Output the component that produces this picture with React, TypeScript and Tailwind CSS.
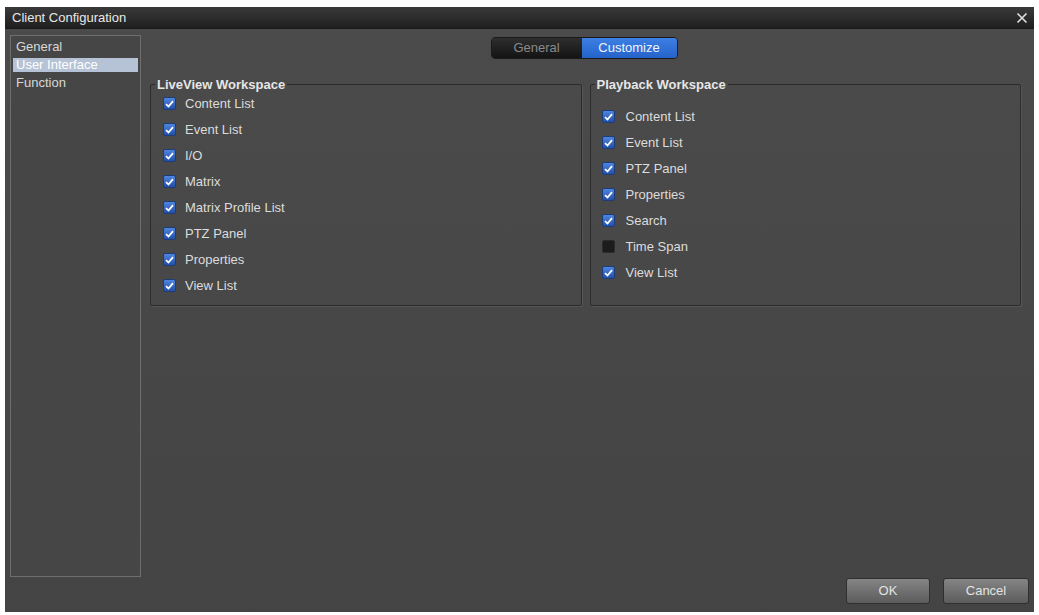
import React from "react";

const liveView = [
  "Content List",
  "Event List",
  "I/O",
  "Matrix",
  "Matrix Profile List",
  "PTZ Panel",
  "Properties",
  "View List",
];

const playback: [string, boolean][] = [
  ["Content List", true],
  ["Event List", true],
  ["PTZ Panel", true],
  ["Properties", true],
  ["Search", true],
  ["Time Span", false],
  ["View List", true],
];

function Check({ on }: { on: boolean }) {
  if (!on) {
    return <span className="w-[13px] h-[13px] rounded-[2px] bg-[#1c1c1c] border border-[#2a2a2a] shrink-0" />;
  }
  return (
    <span className="w-[13px] h-[13px] rounded-[2px] bg-gradient-to-b from-[#4f86e0] to-[#234fa8] border border-[#1d3c7a] shrink-0 flex items-center justify-center">
      <svg width="9" height="8" viewBox="0 0 9 8">
        <path d="M1 4.2 L3.5 6.5 L8 1.2" fill="none" stroke="#ffffff" strokeWidth="1.8" />
      </svg>
    </span>
  );
}

function Item({ label, on, gap }: { label: string; on: boolean; gap: string }) {
  return (
    <div className={"h-[26px] flex items-center " + gap}>
      <Check on={on} />
      <span className="text-[13px] text-[#dcdcdc]">{label}</span>
    </div>
  );
}

export default function App() {
  return (
    <div className="w-[1039px] h-[615px] bg-white pt-[7px] px-[5px] pb-[3px] overflow-hidden" style={{ fontFamily: '"Liberation Sans", Arial, sans-serif' }}>
      <div className="h-full flex flex-col bg-gradient-to-b from-[#4b4b4b] to-[#444444]">
        {/* title bar */}
        <div className="h-[22px] shrink-0 flex items-center justify-between pl-[7px] pr-[6px] bg-gradient-to-b from-[#3a3a3a] to-[#1f1f1f] border-b border-[#1a1a1a]">
          <span className="text-[13px] text-[#e8e8e8]">Client Configuration</span>
          <svg width="12" height="12" viewBox="0 0 12 12">
            <path d="M1.5 1.5 L10.5 10.5 M10.5 1.5 L1.5 10.5" stroke="#e0e0e0" strokeWidth="1.6" />
          </svg>
        </div>

        <div className="flex-1 flex pt-[6px] pl-[5px] pr-[13px] min-h-0">
          {/* sidebar */}
          <div className="w-[131px] shrink-0 border border-[#6e6e6e] bg-[#464646] pt-[2px] px-[2px]">
            <div className="h-[18px] flex items-center pl-[3px] text-[13px] text-[#d8d8d8]">General</div>
            <div className="h-[18px] flex items-center">
              <div className="h-[14px] w-full flex items-center pl-[3px] text-[13px] text-white bg-[#b6c2d6]">User Interface</div>
            </div>
            <div className="h-[18px] flex items-center pl-[3px] text-[13px] text-[#d8d8d8]">Function</div>
          </div>

          {/* content */}
          <div className="flex-1 ml-[9px] flex flex-col">
            <div className="flex justify-center mt-[2px] ml-[-3px]">
              <div className="flex h-[22px] rounded-[4px] overflow-hidden border border-[#1a1a1a]">
                <div className="w-[90px] flex items-center justify-center bg-gradient-to-b from-[#2e2e2e] to-[#141414] text-[13px] text-[#8a8a8a]">General</div>
                <div className="w-[95px] flex items-center justify-center bg-gradient-to-b from-[#3d7fe4] to-[#2563c9] text-[13px] text-[#eef4ff]">Customize</div>
              </div>
            </div>

            <div className="flex gap-[8px] mt-[16px] h-[231px]">
              <fieldset className="flex-1 border border-[#2c2c2c] rounded-[2px] pb-[6px] shadow-[1px_1px_0_#555]">
                <legend className="ml-[4px] px-[2px] text-[13px] font-bold text-[#e6e6e6]">LiveView Workspace</legend>
                <div className="mt-[-4px] pl-[12px]">
                  {liveView.map((l) => (
                    <Item key={l} label={l} on={true} gap="gap-[9px]" />
                  ))}
                </div>
              </fieldset>
              <fieldset className="flex-1 border border-[#2c2c2c] rounded-[2px] shadow-[1px_1px_0_#555]">
                <legend className="ml-[4px] px-[2px] text-[13px] font-bold text-[#e6e6e6]">Playback Workspace</legend>
                <div className="mt-[9px] pl-[11px]">
                  {playback.map(([l, on]) => (
                    <Item key={l} label={l} on={on} gap="gap-[11px]" />
                  ))}
                </div>
              </fieldset>
            </div>
          </div>
        </div>

        {/* footer */}
        <div className="h-[35px] shrink-0 flex justify-end items-start pt-[1px] pr-[5px] gap-[13px]">
          <button className="w-[84px] h-[26px] rounded-[3px] border border-[#2f2f2f] bg-gradient-to-b from-[#858585] to-[#5c5c5c] text-[13px] text-[#e4e4e4]">OK</button>
          <button className="w-[86px] h-[26px] rounded-[3px] border border-[#2f2f2f] bg-gradient-to-b from-[#858585] to-[#5c5c5c] text-[13px] text-[#e4e4e4]">Cancel</button>
        </div>
      </div>
    </div>
  );
}
